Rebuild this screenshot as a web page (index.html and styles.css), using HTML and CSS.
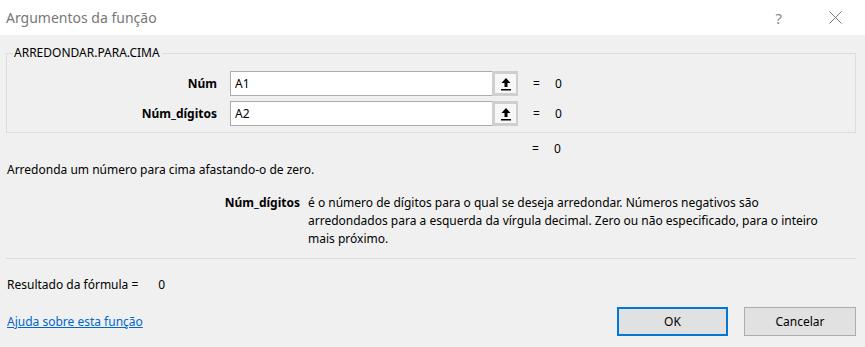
FILE: index.html
```html
<!DOCTYPE html>
<html lang="pt">
<head>
  <meta charset="UTF-8">
  <title>Argumentos da função</title>
  <link rel="stylesheet" href="styles.css">
</head>
<body>
  <div class="dialog">
    <header class="titlebar">
      <span class="title">Argumentos da função</span>
      <span class="help">?</span>
      <svg class="close" width="13" height="13" viewBox="0 0 13 13">
        <path d="M0.5 0.5 L12.5 12.5 M12.5 0.5 L0.5 12.5" stroke="#7a7a7a" stroke-width="1" fill="none"/>
      </svg>
    </header>

    <main class="body">
      <fieldset class="group">
        <legend>ARREDONDAR.PARA.CIMA</legend>
        <div class="arg-row">
          <label class="arg-label" for="num">Núm</label>
          <div class="ref-box">
            <input id="num" class="ref-input" value="A1">
            <span class="ref-btn">
              <svg width="12" height="14" viewBox="0 0 12 14"><path d="M6 1 L10.5 6 H7.5 V10 H4.5 V6 H1.5 Z M1 12 H11 V13.5 H1 Z" fill="#000"/></svg>
            </span>
          </div>
          <span class="eq">=</span>
          <span class="val">0</span>
        </div>
        <div class="arg-row">
          <label class="arg-label" for="digits">Núm_dígitos</label>
          <div class="ref-box">
            <input id="digits" class="ref-input" value="A2">
            <span class="ref-btn">
              <svg width="12" height="14" viewBox="0 0 12 14"><path d="M6 1 L10.5 6 H7.5 V10 H4.5 V6 H1.5 Z M1 12 H11 V13.5 H1 Z" fill="#000"/></svg>
            </span>
          </div>
          <span class="eq">=</span>
          <span class="val">0</span>
        </div>
      </fieldset>

      <div class="result-row">
        <span class="eq">=</span>
        <span class="val">0</span>
      </div>

      <p class="summary">Arredonda um número para cima afastando-o de zero.</p>

      <div class="arg-help">
        <span class="arg-help-name">Núm_dígitos</span>
        <span class="arg-help-text">é o número de dígitos para o qual se deseja arredondar. Números negativos são arredondados para a esquerda da vírgula decimal. Zero ou não especificado, para o inteiro mais próximo.</span>
      </div>

      <hr class="sep">

      <div class="formula-result">Resultado da fórmula =<span class="formula-val">0</span></div>

      <footer class="footer">
        <a class="help-link" href="#">Ajuda sobre esta função</a>
        <div class="buttons">
          <button class="btn btn-default">OK</button>
          <button class="btn">Cancelar</button>
        </div>
      </footer>
    </main>
  </div>
</body>
</html>
```

FILE: styles.css
```css
body {
  margin: 0;
  background: #f0f0f0;
  font-family: "Noto Sans", "Open Sans", Arial, sans-serif;
  font-size: 12px;
  color: #000;
}
.dialog {
  width: 865px;
  height: 347px;
  overflow: hidden;
}
.titlebar {
  height: 35px;
  background: #fff;
  display: flex;
  align-items: center;
  padding-left: 6px;
}
.title {
  flex: 1;
  font-size: 14px;
  color: #777;
}
.help {
  font-size: 15px;
  color: #888;
  margin-right: 47px;
}
.close {
  margin-right: 23px;
}
.body {
  padding: 0 9px 0 6px;
}
.group {
  margin: 10px 0 0;
  padding: 10px 0 6px;
  border: 1px solid #dcdcdc;
  min-width: 0;
}
.group legend {
  margin-left: 6px;
  padding: 0 2px 0 1px;
  line-height: 16px;
}
.arg-row {
  display: flex;
  align-items: center;
  height: 25px;
}
.arg-row + .arg-row {
  margin-top: 5px;
}
.arg-label {
  width: 210px;
  text-align: right;
  font-weight: bold;
  margin-right: 13px;
}
.ref-box {
  display: flex;
  width: 288px;
  height: 25px;
  box-sizing: border-box;
  border: 1px solid #acacac;
  background: #fff;
}
.ref-input {
  flex: 1;
  border: none;
  outline: none;
  padding: 0 4px;
  font: inherit;
  min-width: 0;
}
.ref-btn {
  width: 26px;
  box-sizing: border-box;
  border: 3px solid #cfcfcf;
  border-right-width: 2px;
  margin: -1px -1px -1px 0;
  background: #f7f7f7;
  display: flex;
  align-items: center;
  justify-content: center;
}
.eq {
  margin-left: 15px;
  width: 22px;
}
.val {
  width: 20px;
}
.result-row {
  display: flex;
  height: 18px;
  line-height: 18px;
  margin: 7px 0 0 526px;
}
.result-row .eq {
  margin-left: 0;
}
.summary {
  margin: 3px 0 0 1px;
  line-height: 18px;
}
.arg-help {
  display: flex;
  margin-top: 15px;
  line-height: 18px;
}
.arg-help-name {
  width: 294px;
  text-align: right;
  font-weight: bold;
  flex-shrink: 0;
}
.arg-help-text {
  margin-left: 8px;
  width: 530px;
}
.sep {
  margin: 10px 0 0;
  border: none;
  border-top: 1px solid #dcdcdc;
}
.formula-result {
  margin: 17px 0 0 1px;
  line-height: 18px;
}
.formula-val {
  margin-left: 20px;
}
.footer {
  display: flex;
  align-items: center;
  justify-content: space-between;
  margin-top: 13px;
  padding-left: 1px;
}
.help-link {
  color: #0066cc;
  text-decoration: underline;
}
.buttons {
  display: flex;
  gap: 16px;
}
.btn {
  width: 112px;
  height: 29px;
  font: inherit;
  background: #e1e1e1;
  border: 1px solid #adadad;
  color: #000;
  padding: 0;
}
.btn-default {
  width: 111px;
  border: 2px solid #0078d7;
}
```
